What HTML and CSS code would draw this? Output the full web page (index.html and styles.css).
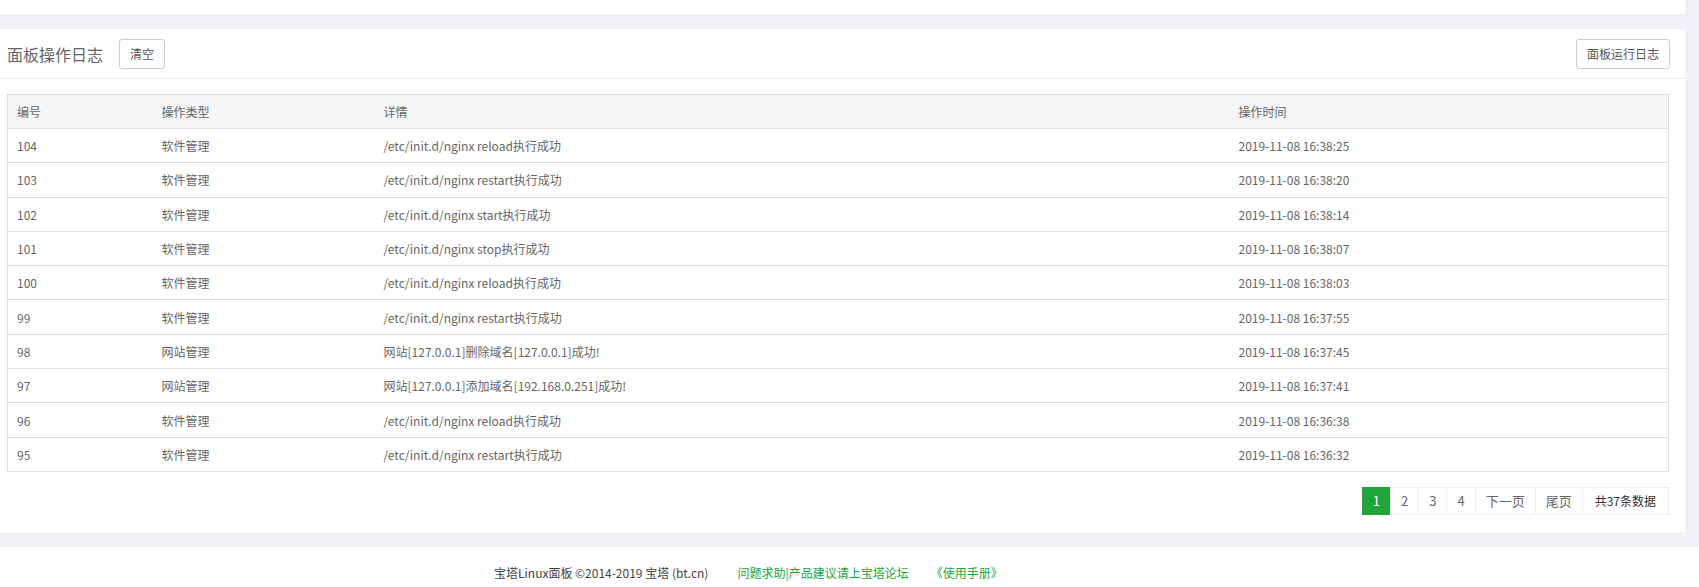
FILE: index.html
```html
<!DOCTYPE html>
<html lang="zh-CN">
<head>
<meta charset="utf-8">
<title>面板操作日志</title>
<link rel="stylesheet" href="styles.css">
</head>
<body>
<div class="main">
  <div class="top-panel"></div>
  <div class="panel">
    <div class="panel-head">
      <div class="head-left">
        <span class="title">面板操作日志</span>
        <button class="btn">清空</button>
      </div>
      <button class="btn">面板运行日志</button>
    </div>
    <div class="panel-body">
      <table class="log-table">
        <colgroup>
          <col class="c1"><col class="c2"><col class="c3"><col class="c4">
        </colgroup>
        <thead>
          <tr><th>编号</th><th>操作类型</th><th>详情</th><th>操作时间</th></tr>
        </thead>
        <tbody>
          <tr><td>104</td><td>软件管理</td><td>/etc/init.d/nginx reload执行成功</td><td>2019-11-08 16:38:25</td></tr>
          <tr><td>103</td><td>软件管理</td><td>/etc/init.d/nginx restart执行成功</td><td>2019-11-08 16:38:20</td></tr>
          <tr><td>102</td><td>软件管理</td><td>/etc/init.d/nginx start执行成功</td><td>2019-11-08 16:38:14</td></tr>
          <tr><td>101</td><td>软件管理</td><td>/etc/init.d/nginx stop执行成功</td><td>2019-11-08 16:38:07</td></tr>
          <tr><td>100</td><td>软件管理</td><td>/etc/init.d/nginx reload执行成功</td><td>2019-11-08 16:38:03</td></tr>
          <tr><td>99</td><td>软件管理</td><td>/etc/init.d/nginx restart执行成功</td><td>2019-11-08 16:37:55</td></tr>
          <tr><td>98</td><td>网站管理</td><td>网站[127.0.0.1]删除域名[127.0.0.1]成功!</td><td>2019-11-08 16:37:45</td></tr>
          <tr><td>97</td><td>网站管理</td><td>网站[127.0.0.1]添加域名[192.168.0.251]成功!</td><td>2019-11-08 16:37:41</td></tr>
          <tr><td>96</td><td>软件管理</td><td>/etc/init.d/nginx reload执行成功</td><td>2019-11-08 16:36:38</td></tr>
          <tr><td>95</td><td>软件管理</td><td>/etc/init.d/nginx restart执行成功</td><td>2019-11-08 16:36:32</td></tr>
        </tbody>
      </table>
      <div class="pager">
        <span class="pg active">1</span>
        <span class="pg">2</span>
        <span class="pg">3</span>
        <span class="pg">4</span>
        <span class="pg">下一页</span>
        <span class="pg">尾页</span>
        <span class="pg total">共37条数据</span>
      </div>
    </div>
  </div>
</div>
<div class="footer">
  <span class="copy">宝塔Linux面板 ©2014-2019 宝塔 (bt.cn)</span>
  <a class="flink f1">问题求助|产品建议请上宝塔论坛</a>
  <a class="flink f2">《使用手册》</a>
</div>
</body>
</html>
```

FILE: styles.css
```css
* { box-sizing: border-box; }
html, body {
  margin: 0;
  padding: 0;
  background: #fff;
  font-family: "Noto Sans CJK SC", "Noto Sans", sans-serif;
  font-size: 12px;
  color: #666;
}
.main {
  background: #f0f1f5;
  padding-right: 14px;
  padding-bottom: 15px;
}
.top-panel {
  height: 14px;
  background: #fff;
  margin-bottom: 15px;
}
.panel {
  background: #fff;
  padding-bottom: 17px;
}
.panel-head {
  height: 50px;
  border-bottom: 1px solid #ebebeb;
  display: flex;
  align-items: center;
  justify-content: space-between;
  padding: 0 15px 0 7px;
}
.head-left {
  display: flex;
  align-items: center;
}
.title {
  font-size: 16px;
  color: #666;
  line-height: 20px;
  margin-right: 16px;
}
.btn {
  font-family: inherit;
  font-size: 12px;
  color: #555;
  background: #fff;
  border: 1px solid #ccc;
  border-radius: 3px;
  height: 30px;
  padding: 0 10px;
  line-height: 28px;
  cursor: pointer;
}
.panel-body {
  padding: 15px 16px 0 7px;
}
.log-table {
  width: 100%;
  border-collapse: collapse;
  table-layout: fixed;
  border: 1px solid #ddd;
}
.c1 { width: 145px; }
.c2 { width: 222px; }
.c3 { width: 855px; }
.c4 { width: auto; }
.log-table th,
.log-table td {
  text-align: left;
  font-weight: normal;
  padding: 0 9px;
  line-height: 17px;
  color: #666;
  white-space: nowrap;
}
.log-table th {
  background: #f6f6f6;
  height: 34px;
}
.log-table td {
  height: 34.3px;
  border-top: 1px solid #ddd;
}
.pager {
  display: flex;
  justify-content: flex-end;
  margin-top: 15px;
}
.pg {
  height: 28px;
  line-height: 26px;
  padding: 0 10px;
  border: 1px solid #eee;
  margin-left: -1px;
  color: #666;
  background: #fff;
  font-size: 13px;
}
.pg.active {
  background: #20a53a;
  border-color: #20a53a;
  color: #fff;
}
.pg.total {
  color: #333;
  font-size: 12px;
  padding: 0 12px;
}
.footer {
  height: 41px;
  display: flex;
  align-items: center;
  padding-left: 494px;
  padding-top: 10px;
  color: #555;
}
.copy { color: #444; }
.flink {
  color: #20a53a;
  text-decoration: none;
}
.f1 { margin-left: 29px; }
.f2 { margin-left: 22px; }
```
